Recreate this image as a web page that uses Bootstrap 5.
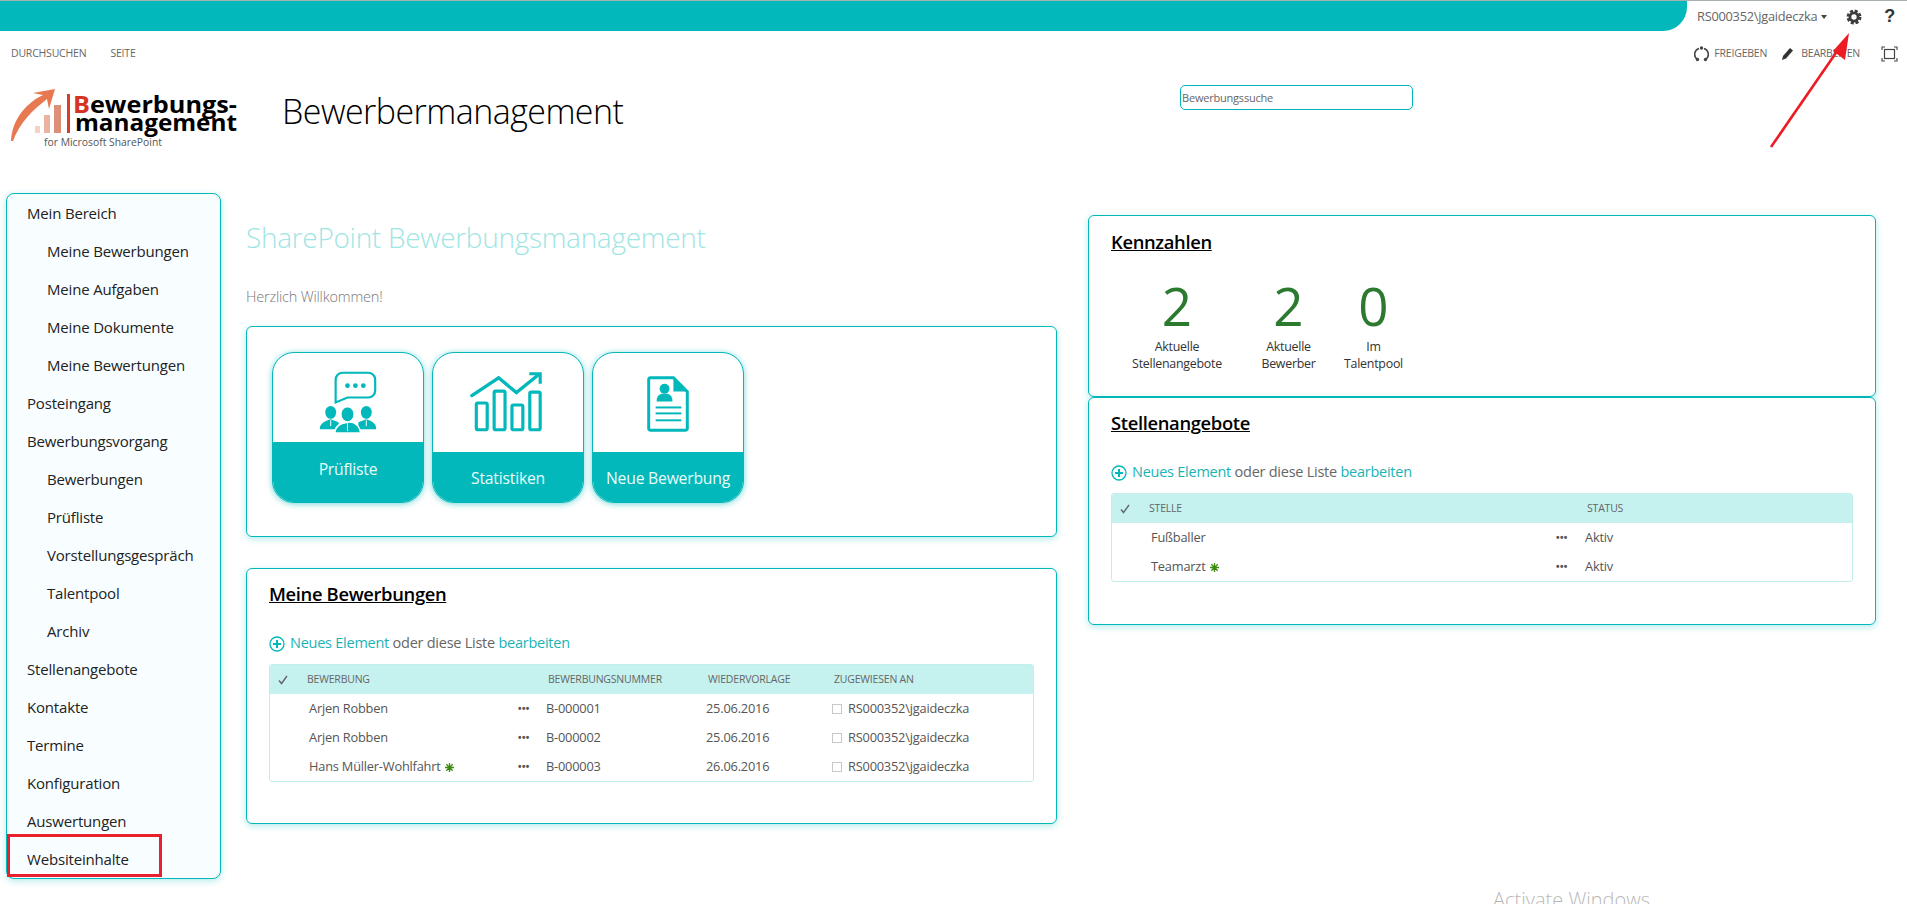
<!DOCTYPE html>
<html lang="de"><head><meta charset="utf-8"><title>Bewerbermanagement</title>
<link href="https://cdn.jsdelivr.net/npm/bootstrap@5.3.0/dist/css/bootstrap.min.css" rel="stylesheet">
<style>
:root{--teal:#02b8ba;--soft:#c5f1ef;--txt:#444;}
html,body{height:904px;overflow:hidden;}
body{font-family:"Open Sans","Liberation Sans",sans-serif;color:#333;background:#fff;position:relative;border-top:1px solid #a9b0b0;}
.top-strip{height:30px;}
.teal-bar{width:1687px;background:var(--teal);border-bottom-right-radius:24px;}
.user-zone{flex:1;padding:1px 0 0 10px;font-size:12.8px;color:#666;letter-spacing:-.25px;}
.user-caret{width:0;height:0;border:3.5px solid transparent;border-top:4px solid #444;border-bottom:0;margin-left:4px;margin-top:1px;}
.gear-mark{margin-left:19px;}
.help-mark{font:700 18px "Liberation Sans",sans-serif;color:#333;margin-left:22px;}
.ribbon{height:39px;padding:6px 9px 0 11px;font-size:10.5px;color:#666;letter-spacing:-.2px;}
.brand-row{height:123px;}
.logo-box{width:282px;height:123px;flex:none;}
.site-title{font-size:34px;font-weight:300;color:#000;letter-spacing:-.55px;line-height:1;margin:24px 0 0 0;width:898px;flex:none;}
.find-box{width:233px;height:25px;border:1px solid var(--teal);border-radius:5px;font-size:11px;color:#666;padding:0 1px;line-height:23px;margin-top:15px;letter-spacing:-.2px;}
.side-menu{width:215px;margin-left:6px;height:686px;border:1px solid var(--teal);border-radius:8px;background:#f8feff;box-shadow:0 2px 7px rgba(2,184,186,.3);flex:none;}
.side-menu .nav-link{height:38px;line-height:39px;padding:0 0 0 20px;font-size:15px;color:#222;letter-spacing:-.18px;}
.side-menu .nav-link.sub-item{padding-left:40px;}
.left-col{width:811px;margin-left:25px;flex:none;}
.right-col{width:788px;margin-left:31px;padding-top:22px;flex:none;}
.page-head{font-size:28px;font-weight:300;color:#9fe5e3;line-height:36px;margin:26px 0 0;letter-spacing:-.3px;}
.welcome{font-size:14.5px;color:#777;line-height:20px;margin:32px 0 19px;font-weight:300;letter-spacing:-.2px;}
.panel-box{border:1px solid var(--teal);border-radius:6px;box-shadow:0 2px 7px rgba(2,184,186,.3);background:#fff;}
.tiles-panel{height:211px;padding:25px;}
.tile-card{width:152px;height:151px;border:1px solid var(--teal);border-radius:22px;overflow:hidden;box-shadow:0 1px 6px rgba(2,184,186,.55);background:#fff;}
.tile-art{flex:1;display:block;}
.tile-band{background:var(--teal);color:#eafdfc;font-size:15.7px;letter-spacing:-.2px;display:flex;justify-content:center;}
.band-a{height:60px;padding-top:16px;}
.band-b{height:50px;padding-top:15px;}
.apps-panel{height:256px;margin-top:31px;padding:13px 22px 0;}
.panel-title{font-size:18.4px;font-weight:600;color:#000;text-decoration:underline;line-height:24px;margin:0;letter-spacing:-.35px;}
.add-line{margin-top:27px;font-size:14.5px;color:#666;height:20px;line-height:20px;letter-spacing:-.25px;}
.add-line a{color:#1ab3b5;text-decoration:none;}
.add-line svg{margin-right:5px;vertical-align:-4px;}
.list-wrap{margin-top:11px;border:1px solid #c2eeec;border-radius:3px;overflow:hidden;}
.list-tbl{table-layout:fixed;margin:0;font-size:12.8px;color:#555;letter-spacing:-.2px;width:100%;}
.list-tbl th{background:var(--soft);height:29px;padding:0 0 0 2px;font-size:10.5px;font-weight:400;color:#666;border:0;vertical-align:middle;white-space:nowrap;}
.list-tbl td{height:29px;padding:0;border:0;vertical-align:middle;white-space:nowrap;color:#555;}
.list-tbl td.name-cell{padding-left:4px;}
.list-tbl td.dots-txt{font:700 10px "Liberation Sans",sans-serif;letter-spacing:.4px;color:#555;}
.square-mark{display:inline-block;width:10px;height:10px;border:1px solid #c8c8c8;margin-right:6px;vertical-align:-1px;}
.new-mark{margin-left:4px;vertical-align:-1px;}
.facts-panel{height:182px;padding:14px 22px 0;}
.jobs-panel{height:228px;padding:13px 22px 0;}
.fact-row{margin:24px 0 0 6px;}
.fact-col{text-align:center;font-size:12.4px;line-height:17px;color:#333;letter-spacing:-.25px;}
.fact-col b{display:block;font-size:53px;font-weight:400;line-height:56px;color:#2b7a2f;letter-spacing:0;margin-bottom:4px;}
.anno-frame{position:absolute;left:7px;top:833px;width:155px;height:43px;border:3px solid #e8212f;}
.anno-arrow{position:absolute;left:1760px;top:20px;}
.win-mark{position:absolute;left:1493px;top:884px;font-size:20px;color:#b8b8b8;font-weight:300;}
</style></head><body>

<div class="top-strip d-flex">
  <div class="teal-bar"></div>
  <div class="user-zone d-flex align-items-center">
    <span>RS000352\jgaideczka</span><span class="user-caret"></span>
    <svg class="gear-mark" width="16" height="16" viewBox="0 0 18 18"><circle cx="9" cy="9" r="4.6" fill="none" stroke="#3d3d3d" stroke-width="3.2"/><circle cx="9" cy="9" r="7" fill="none" stroke="#3d3d3d" stroke-width="2.8" stroke-dasharray="3.4 2.1"/></svg>
    <span class="help-mark">?</span>
  </div>
</div>

<div class="ribbon d-flex align-items-center">
  <span>DURCHSUCHEN</span><span class="ms-4">SEITE</span>
  <span class="ms-auto d-flex align-items-center">
    <svg width="15" height="16" viewBox="0 0 15 16" style="margin-right:5px"><path d="M5 2.5A6 6 0 0 0 3 13M10 2.5A6 6 0 0 1 12 13" fill="none" stroke="#444" stroke-width="1.6"/><circle cx="7.5" cy="2" r="1.7" fill="#444"/><circle cx="3.5" cy="13.5" r="1.7" fill="#444"/><circle cx="11.5" cy="13.5" r="1.7" fill="#444"/></svg>
    <span>FREIGEBEN</span>
    <svg width="13" height="14" viewBox="0 0 13 14" style="margin-left:14px;margin-right:7px"><path d="M1 13l1-4 7-8 3 2.5-7 8z" fill="#333"/></svg>
    <span>BEARBEITEN</span>
    <svg width="17" height="16" viewBox="0 0 17 16" style="margin-left:21px"><path d="M1 4V1h3M13 1h3v3M1 12v3h3M13 15h3v-3" fill="none" stroke="#444" stroke-width="1.1"/><rect x="3.5" y="3.5" width="10" height="9" fill="none" stroke="#444" stroke-width="1.2"/></svg>
  </span>
</div>

<div class="brand-row d-flex">
  <div class="logo-box">
    <svg width="282" height="123" viewBox="0 70 282 123">
      <path d="M11 141C12 118 28 102 43 95L33 93 55 89 49 109 47 99C33 110 20 122 13 141z" fill="#e8784f"/>
      <rect x="35" y="126" width="5" height="7" fill="#f6d2c4"/><rect x="44" y="115" width="6" height="18" fill="#e9b3a0"/><rect x="54" y="105" width="7" height="28" fill="#dd8f78"/><rect x="67" y="94" width="3" height="39" fill="#d5402a"/>
      <text x="73" y="113" font-family="Open Sans" font-weight="700" font-size="24" textLength="164" lengthAdjust="spacingAndGlyphs"><tspan fill="#d5341f">B</tspan>ewerbungs-</text>
      <text x="75" y="131" font-family="Open Sans" font-weight="700" font-size="24" textLength="162" lengthAdjust="spacingAndGlyphs">management</text>
      <text x="44" y="146" font-family="Open Sans" font-size="10.5" fill="#555" textLength="118" lengthAdjust="spacingAndGlyphs">for Microsoft SharePoint</text>
    </svg>
  </div>
  <h1 class="site-title">Bewerbermanagement</h1>
  <div class="find-box">Bewerbungssuche</div>
</div>

<div class="d-flex align-items-start">
  <nav class="side-menu nav flex-column">
    <a class="nav-link" href="#">Mein Bereich</a>
    <a class="nav-link sub-item" href="#">Meine Bewerbungen</a>
    <a class="nav-link sub-item" href="#">Meine Aufgaben</a>
    <a class="nav-link sub-item" href="#">Meine Dokumente</a>
    <a class="nav-link sub-item" href="#">Meine Bewertungen</a>
    <a class="nav-link" href="#">Posteingang</a>
    <a class="nav-link" href="#">Bewerbungsvorgang</a>
    <a class="nav-link sub-item" href="#">Bewerbungen</a>
    <a class="nav-link sub-item" href="#">Prüfliste</a>
    <a class="nav-link sub-item" href="#">Vorstellungsgespräch</a>
    <a class="nav-link sub-item" href="#">Talentpool</a>
    <a class="nav-link sub-item" href="#">Archiv</a>
    <a class="nav-link" href="#">Stellenangebote</a>
    <a class="nav-link" href="#">Kontakte</a>
    <a class="nav-link" href="#">Termine</a>
    <a class="nav-link" href="#">Konfiguration</a>
    <a class="nav-link" href="#">Auswertungen</a>
    <a class="nav-link" href="#">Websiteinhalte</a>
  </nav>

  <main class="left-col">
    <h2 class="page-head">SharePoint Bewerbungsmanagement</h2>
    <p class="welcome">Herzlich Willkommen!</p>

    <section class="panel-box tiles-panel d-flex" style="gap:8px">
      <div class="tile-card d-flex flex-column">
        <svg class="tile-art" viewBox="0 0 151 90" fill="#02b8ba">
          <path d="M63 50V27a7 7 0 0 1 7-7h26a7 7 0 0 1 7 7v11a7 7 0 0 1-7 7H75z" fill="none" stroke="#02b8ba" stroke-width="2.2"/>
          <circle cx="75" cy="33" r="2.4"/><circle cx="83" cy="33" r="2.4"/><circle cx="91" cy="33" r="2.4"/>
          <ellipse cx="58" cy="60" rx="5.5" ry="6.5"/><ellipse cx="94" cy="60" rx="5.5" ry="6.5"/>
          <path d="M47 77c0-6 5-8 11-10l8 3v7zM86 70l8-3c6 2 10 4 10 10H86z"/>
          <path d="M62 81c0-7 6-10 13-11s13 4 13 11z" stroke="#fff" stroke-width="1.5"/>
          <ellipse cx="75" cy="62" rx="6.5" ry="7.5" stroke="#fff" stroke-width="1"/>
          <path d="M75 71v8M58 68v6M94 68v6" stroke="#fff" stroke-width="1"/>
        </svg>
        <div class="tile-band band-a">Prüfliste</div>
      </div>
      <div class="tile-card d-flex flex-column">
        <svg class="tile-art" viewBox="0 0 151 100" fill="none" stroke="#02b8ba">
          <path d="M39 43L66 25 84 40 105 23" stroke-width="3.4" stroke-linecap="round"/><path d="M97 21H108V31" stroke-width="3.2"/>
          <rect x="43.5" y="50.5" width="11" height="27" rx="1.5" stroke-width="3.2"/><rect x="61.5" y="38.5" width="11" height="39" rx="1.5" stroke-width="3.2"/><rect x="79.5" y="52.5" width="11" height="25" rx="1.5" stroke-width="3.2"/><rect x="97.5" y="39.5" width="10.5" height="38" rx="1.5" stroke-width="3.2"/>
        </svg>
        <div class="tile-band band-b">Statistiken</div>
      </div>
      <div class="tile-card d-flex flex-column">
        <svg class="tile-art" viewBox="0 0 151 100" fill="#02b8ba">
          <path d="M58 25h23l14 14v37a2 2 0 0 1-2 2H58a2 2 0 0 1-2-2V27a2 2 0 0 1 2-2z" fill="none" stroke="#02b8ba" stroke-width="3"/><path d="M81 25v14h14z"/>
          <circle cx="72" cy="36" r="5"/><path d="M64 49c0-6 3-8 8-8s8 2 8 8z"/>
          <rect x="63" y="54" width="26" height="2"/><rect x="63" y="60" width="26" height="2"/><rect x="63" y="67" width="26" height="2"/>
        </svg>
        <div class="tile-band band-b">Neue Bewerbung</div>
      </div>
    </section>

    <section class="panel-box apps-panel">
      <h3 class="panel-title">Meine Bewerbungen</h3>
      <div class="add-line"><svg width="16" height="16" viewBox="0 0 16 16"><circle cx="8" cy="8" r="7" fill="none" stroke="#02b8ba" stroke-width="1.3"/><path d="M8 4v8M4 8h8" stroke="#02b8ba" stroke-width="2"/></svg><a href="#">Neues Element</a> oder diese Liste <a href="#">bearbeiten</a></div>
      <div class="list-wrap">
        <table class="table list-tbl">
          <colgroup><col style="width:35px"><col style="width:213px"><col style="width:28px"><col style="width:160px"><col style="width:126px"><col></colgroup>
          <thead><tr><th><svg width="10" height="10" viewBox="0 0 10 10" style="margin-left:6px"><path d="M1 5.5l2.5 3L9 1" fill="none" stroke="#666" stroke-width="1.4"/></svg></th><th>BEWERBUNG</th><th></th><th>BEWERBUNGSNUMMER</th><th>WIEDERVORLAGE</th><th>ZUGEWIESEN AN</th></tr></thead>
          <tbody>
            <tr><td></td><td class="name-cell">Arjen Robben</td><td class="dots-txt">•••</td><td>B-000001</td><td>25.06.2016</td><td><span class="square-mark"></span>RS000352\jgaideczka</td></tr>
            <tr><td></td><td class="name-cell">Arjen Robben</td><td class="dots-txt">•••</td><td>B-000002</td><td>25.06.2016</td><td><span class="square-mark"></span>RS000352\jgaideczka</td></tr>
            <tr><td></td><td class="name-cell">Hans Müller-Wohlfahrt<svg class="new-mark" width="9" height="9" viewBox="0 0 9 9"><path d="M4.5 0v9M0 4.5h9M1.3 1.3l6.4 6.4M7.7 1.3L1.3 7.7" stroke="#3c8a10" stroke-width="1.3"/></svg></td><td class="dots-txt">•••</td><td>B-000003</td><td>26.06.2016</td><td><span class="square-mark"></span>RS000352\jgaideczka</td></tr>
          </tbody>
        </table>
      </div>
    </section>
  </main>

  <aside class="right-col">
    <section class="panel-box facts-panel">
      <h3 class="panel-title">Kennzahlen</h3>
      <div class="fact-row d-flex">
        <div class="fact-col" style="width:120px"><b>2</b>Aktuelle<br>Stellenangebote</div>
        <div class="fact-col" style="width:103px"><b>2</b>Aktuelle<br>Bewerber</div>
        <div class="fact-col" style="width:67px"><b>0</b>Im<br>Talentpool</div>
      </div>
    </section>
    <section class="panel-box jobs-panel">
      <h3 class="panel-title">Stellenangebote</h3>
      <div class="add-line"><svg width="16" height="16" viewBox="0 0 16 16"><circle cx="8" cy="8" r="7" fill="none" stroke="#02b8ba" stroke-width="1.3"/><path d="M8 4v8M4 8h8" stroke="#02b8ba" stroke-width="2"/></svg><a href="#">Neues Element</a> oder diese Liste <a href="#">bearbeiten</a></div>
      <div class="list-wrap">
        <table class="table list-tbl">
          <colgroup><col style="width:35px"><col style="width:409px"><col style="width:29px"><col></colgroup>
          <thead><tr><th><svg width="10" height="10" viewBox="0 0 10 10" style="margin-left:6px"><path d="M1 5.5l2.5 3L9 1" fill="none" stroke="#666" stroke-width="1.4"/></svg></th><th>STELLE</th><th></th><th>STATUS</th></tr></thead>
          <tbody>
            <tr><td></td><td class="name-cell">Fußballer</td><td class="dots-txt">•••</td><td>Aktiv</td></tr>
            <tr><td></td><td class="name-cell">Teamarzt<svg class="new-mark" width="9" height="9" viewBox="0 0 9 9"><path d="M4.5 0v9M0 4.5h9M1.3 1.3l6.4 6.4M7.7 1.3L1.3 7.7" stroke="#3c8a10" stroke-width="1.3"/></svg></td><td class="dots-txt">•••</td><td>Aktiv</td></tr>
          </tbody>
        </table>
      </div>
    </section>
  </aside>
</div>

<div class="anno-frame"></div>
<svg class="anno-arrow" width="100" height="130" viewBox="1760 20 100 130"><path d="M1771 146L1840 46" stroke="#ed1c24" stroke-width="2.6" fill="none"/><path d="M1849 32L1833 50 1845 59z" fill="#ed1c24"/></svg>
<div class="win-mark">Activate Windows</div>
</body></html>
